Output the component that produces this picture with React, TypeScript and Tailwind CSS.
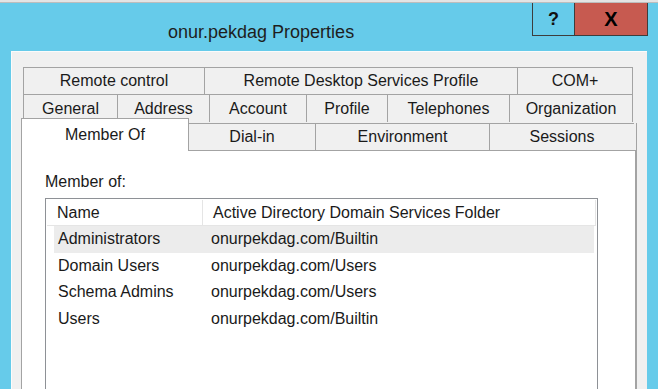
import React from 'react';

type Tab = { label: string; w: string };

const row1: Tab[] = [
  { label: 'Remote control', w: 'w-[181px]' },
  { label: 'Remote Desktop Services Profile', w: 'w-[313px]' },
  { label: 'COM+', w: 'w-[116px]' },
];

const row2: Tab[] = [
  { label: 'General', w: 'w-[94px]' },
  { label: 'Address', w: 'w-[92px]' },
  { label: 'Account', w: 'w-[97px]' },
  { label: 'Profile', w: 'w-[81px]' },
  { label: 'Telephones', w: 'w-[122px]' },
  { label: 'Organization', w: 'w-[124px]' },
];

const row3: Tab[] = [
  { label: 'Dial-in', w: 'w-[126px]' },
  { label: 'Environment', w: 'w-[174px]' },
  { label: 'Sessions', w: 'w-[145px]' },
];

const groups = [
  { name: 'Administrators', folder: 'onurpekdag.com/Builtin' },
  { name: 'Domain Users', folder: 'onurpekdag.com/Users' },
  { name: 'Schema Admins', folder: 'onurpekdag.com/Users' },
  { name: 'Users', folder: 'onurpekdag.com/Builtin' },
];

const TabRow = ({ tabs, h }: { tabs: Tab[]; h: string }) => (
  <div className="flex">
    {tabs.map((t, i) => (
      <div
        key={t.label}
        className={`${t.w} ${h} flex items-center justify-center border-t border-l border-[#a3a3a3] bg-[#f0f0f0] ${
          i === tabs.length - 1 ? 'border-r' : ''
        }`}
      >
        {t.label}
      </div>
    ))}
  </div>
);

export default function App() {
  return (
    <div className="w-[658px] h-[389px] overflow-hidden bg-[#66cbea] text-[16px] text-[#1a1a1a] font-['Liberation_Sans',Arial,sans-serif]">
      <div className="h-[3px] bg-[#e4e4e4] border-b border-[#bdbdbd]" />

      {/* title bar */}
      <div className="relative h-[48px]">
        <div className="absolute left-[168px] top-[16px] text-[18px] text-[#1e1e1e]">onur.pekdag Properties</div>
        <div className="absolute right-[10px] top-0 flex h-[33px]">
          <div className="w-[43px] flex items-center justify-center border border-[#3d3d3d] border-t-0 bg-[#66cbea] text-[18px] font-bold text-[#111]">
            ?
          </div>
          <div className="w-[73px] flex items-center justify-center border border-l-0 border-t-0 border-[#3d3d3d] bg-[#c75a50] text-[20px] font-bold text-black">
            X
          </div>
        </div>
      </div>

      {/* dialog body */}
      <div className="ml-[11px] w-[636px] h-[338px] bg-[#f0f0f0] border-l border-t border-[#fbfbfb] pt-[15px] pl-[9px]">
        <div className="ml-[2px]">
          <TabRow tabs={row1} h="h-[27px]" />
          <TabRow tabs={row2} h="h-[28px]" />
        </div>

        <div className="-mt-[4px] flex items-end">
          <div className="relative z-10 w-[168px] h-[33px] bg-white border-t border-l border-r border-[#a3a3a3] flex justify-center pt-[4px]">
            Member Of
          </div>
          {row3.map((t, i) => (
            <div
              key={t.label}
              className={`${t.w} h-[28px] flex items-center justify-center border-t border-b border-[#a3a3a3] bg-[#f0f0f0] ${
                i === 0 ? '' : 'border-l'
              }`}
            >
              {t.label}
            </div>
          ))}
          <div className="w-[3px] h-[28px] border-b border-r border-[#a3a3a3]" />
        </div>

        <div className="-mt-[1px] w-[616px] h-[250px] bg-white border-l border-r-2 border-[#a3a3a3] pl-[23px] pt-[23px]">
          <div className="text-[16px] leading-[18px]">Member of:</div>
          <div className="mt-[7px] w-[553px] h-[200px] border border-[#8e9196] pt-[1px] px-[1px]">
            <div className="flex h-[26px] items-center border-b border-r border-[#e5e5e5]">
              <div className="w-[156px] h-full flex items-center pl-[10px] border-r border-[#e5e5e5]">Name</div>
              <div className="pl-[10px]">Active Directory Domain Services Folder</div>
            </div>
            <div className="pl-[7px] pr-[2px]">
              {groups.map((g, i) => (
                <div key={g.name} className={`flex h-[26.5px] items-center ${i === 0 ? 'bg-[#ececec]' : ''}`}>
                  <div className="w-[157px] pl-[4px]">{g.name}</div>
                  <div>{g.folder}</div>
                </div>
              ))}
            </div>
          </div>
        </div>
      </div>
    </div>
  );
}
